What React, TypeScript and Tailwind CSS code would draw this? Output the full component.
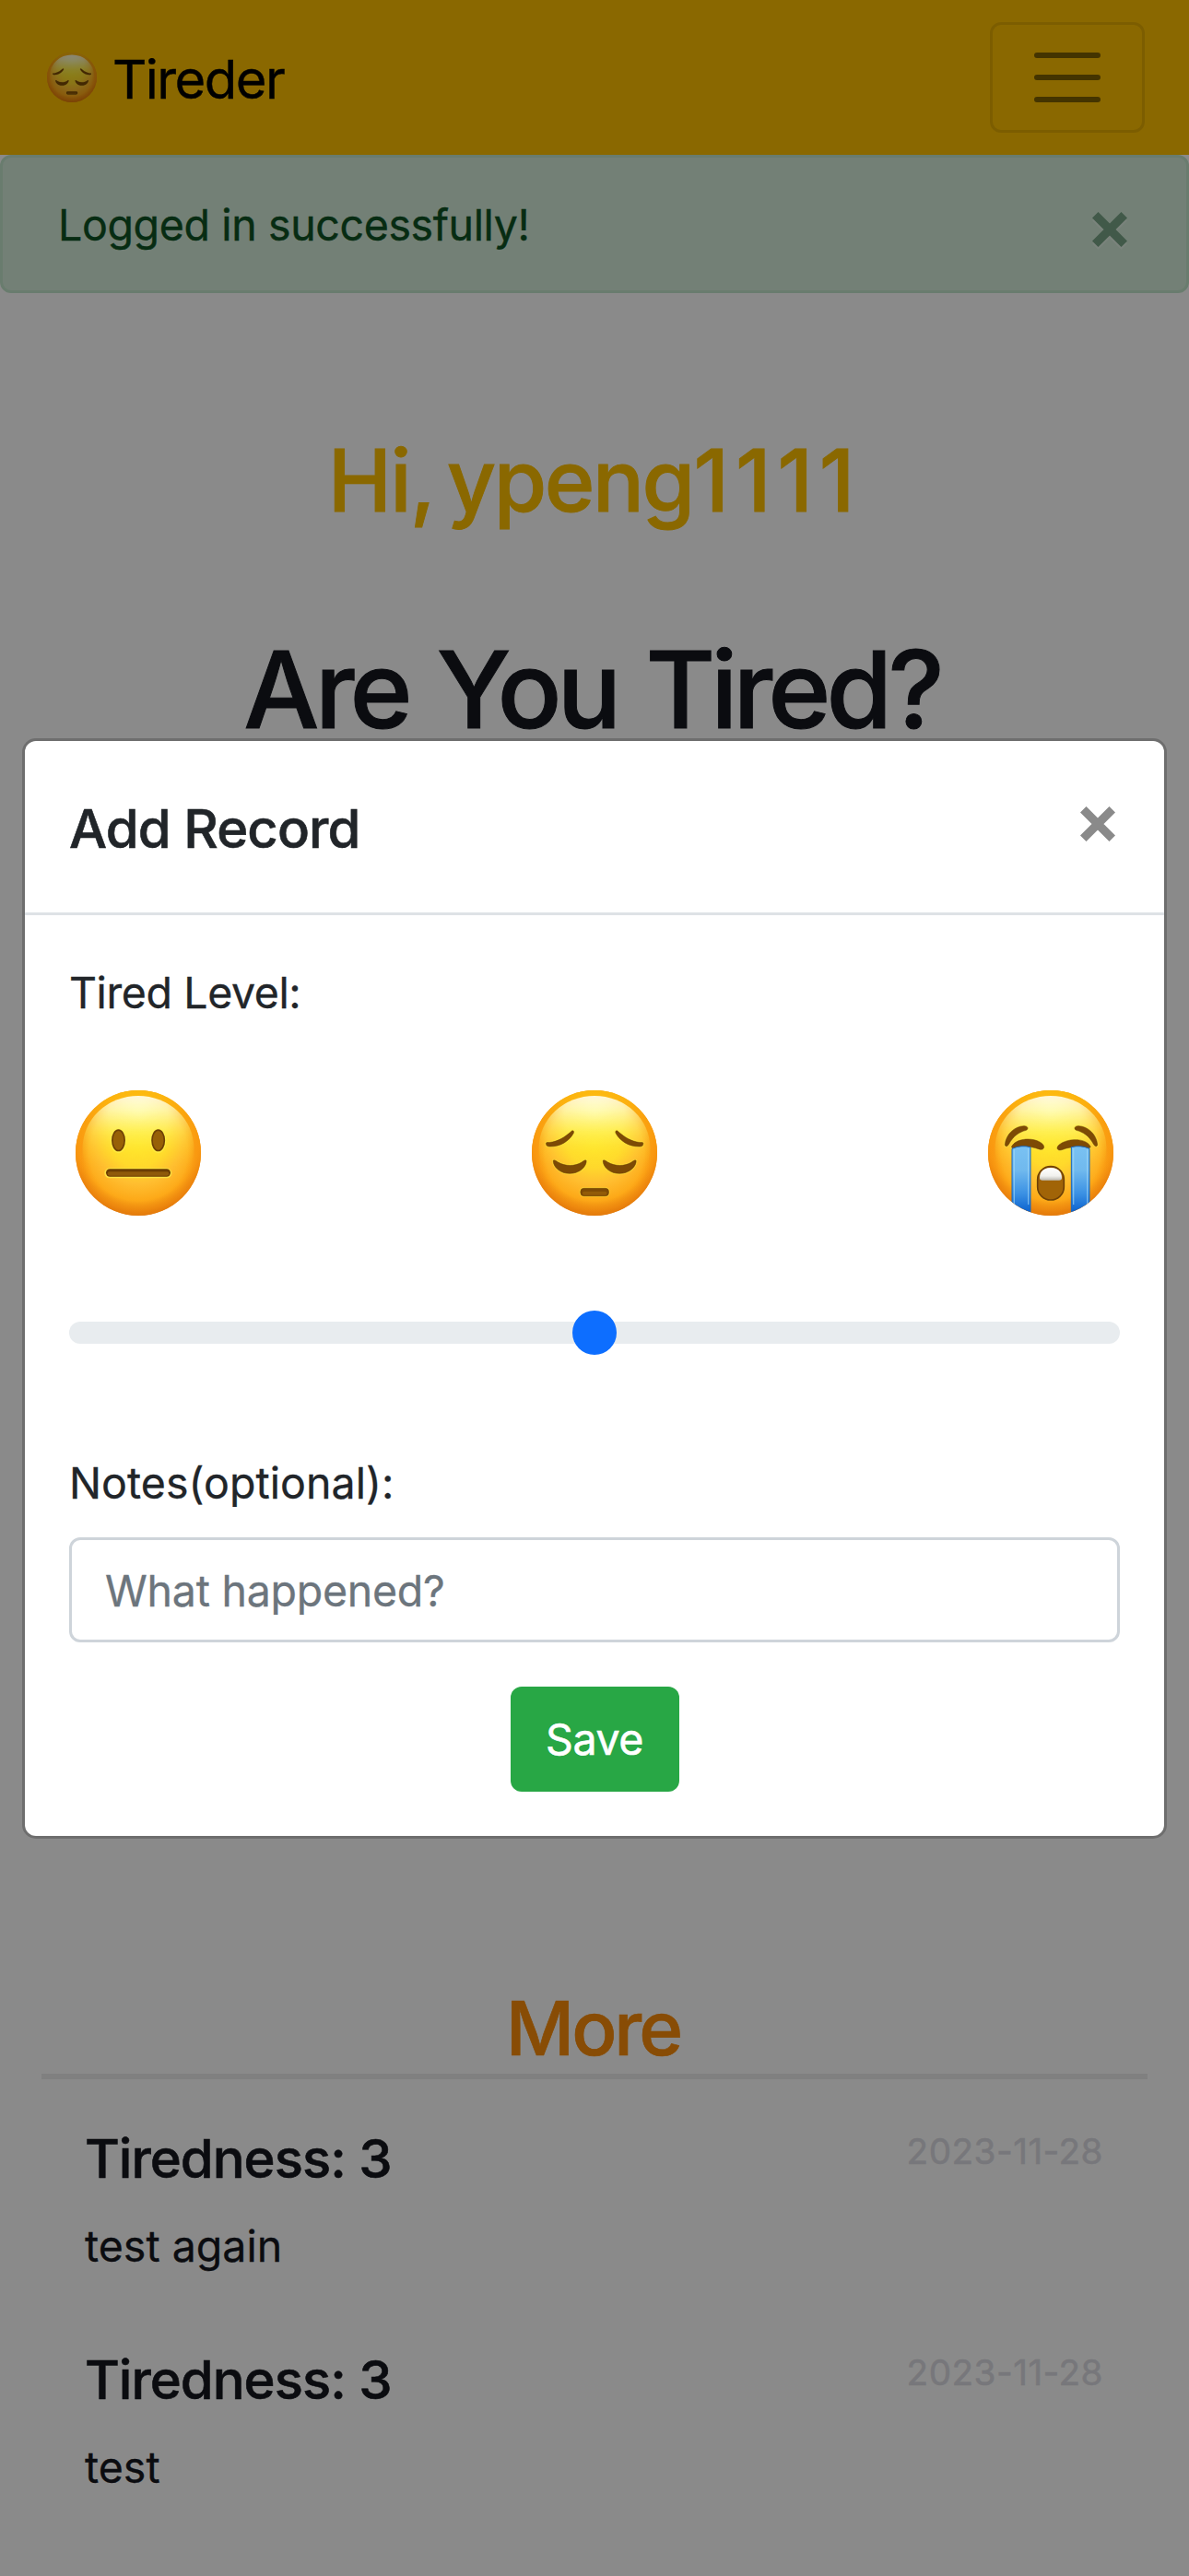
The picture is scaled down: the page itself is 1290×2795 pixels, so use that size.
import type { ReactNode } from "react";

type Mood = "neutral" | "pensive" | "crying";

const INK = "#7d4a05";

function Features({ mood, id }: { mood: Mood; id: string }): ReactNode {
  if (mood === "neutral") {
    return (
      <g>
        <g fill="none" stroke="#fff04a" strokeWidth="6" opacity="0.7">
          <ellipse cx="175.500" cy="202.500" rx="23" ry="37" />
          <ellipse cx="305" cy="202.500" rx="23" ry="37" />
          <rect x="133" y="294" width="213" height="27" rx="13" />
        </g>
        <g fill="#976007" stroke="#6f4106" strokeWidth="5">
          <ellipse cx="175.500" cy="201" rx="20" ry="33.500" />
          <ellipse cx="305" cy="201" rx="20" ry="33.500" />
        </g>
        <rect x="135" y="294" width="210" height="25" rx="12.500" fill="#6b3d03" />
        <rect x="140" y="303" width="200" height="13" rx="6.500" fill="#8f5a0a" />
      </g>
    );
  }
  if (mood === "pensive") {
    const shapes = (
      <>
        <path d="M85 212C84 205 92 209 106 206C134 200 153 184 168 171C173 167 177 172 174 178C160 203 132 222 96 221C89 221 85 218 85 212Z" />
        <path d="M401 212C402 205 394 209 380 206C352 200 333 184 318 171C313 167 309 172 312 178C326 203 354 222 390 221C397 221 401 218 401 212Z" />
        <path d="M108 267C111 263 118 268 124 272C148 286 178 286 201 272C208 267 213 263 216 267C217 285 195 309 162 309C128 309 108 286 108 267Z" />
        <path d="M270 267C273 263 280 268 286 272C310 286 340 286 363 272C370 267 375 263 378 267C379 285 357 309 324 309C290 309 270 286 270 267Z" />
        <rect x="197" y="357" width="92" height="25" rx="11" />
      </>
    );
    return (
      <g transform="translate(-2.500 0)">
        <g fill="none" stroke="#ffec3d" strokeWidth="7" opacity="0.55">
          {shapes}
        </g>
        <g fill={INK} stroke="#693b03" strokeWidth="1.500">
          {shapes}
        </g>
        <rect x="203" y="367" width="80" height="12" rx="6" fill="#925b08" />
      </g>
    );
  }
  const brows = (
    <>
      <path d="M91 214C94 182 121 155 153 154C165 154 169 163 160 168C137 174 119 186 104 213C99 223 91 222 91 214Z" />
      <path d="M392 214C389 182 362 155 330 154C318 154 314 163 323 168C346 174 364 186 379 213C384 223 392 222 392 214Z" />
      <path d="M112 222C121 203 146 197 166 197C194 197 217 210 218 222C218 232 209 232 200 229C172 219 143 219 116 228Z" />
      <path d="M370 222C361 203 336 198 315 199C287 200 262 214 261 225C261 234 270 234 279 231C307 220 337 220 364 228Z" />
    </>
  );
  return (
    <g>
      <g fill="none" stroke="#ffee48" strokeWidth="7" opacity="0.5">
        {brows}
      </g>
      <g fill={INK} stroke="#693b03" strokeWidth="1.500">
        {brows}
      </g>
      <g clipPath={`url(#${id}-clip)`}>
        <path d="M114 228Q144 215 174 223V460H114Z" fill={`url(#${id}-tear)`} stroke="#1766bd" strokeWidth="3" />
        <path d="M307 223Q337 215 366 228V460H307Z" fill={`url(#${id}-tear)`} stroke="#1766bd" strokeWidth="3" />
        <path d="M121 231V410M167 228V410M314 228V410M359 231V410" stroke="#a4daf8" strokeWidth="4" opacity="0.6" />
      </g>
      <rect x="193" y="283" width="93" height="115" rx="46" fill="#ffdd31" opacity="0.6" />
      <rect x="197" y="286" width="86" height="109" rx="43" fill="#a16407" stroke="#704006" strokeWidth="5" />
      <path d="M204 323C204 300 220 290 240 290S276 300 276 323C276 329 273 331 267 331H213C207 331 204 329 204 323Z" fill={`url(#${id}-teeth)`} />
    </g>
  );
}

function Emoji({ mood, id, className }: { mood: Mood; id: string; className: string }) {
  return (
    <svg viewBox="36 38 408 408" className={className} role="img" aria-label={mood}>
      <defs>
        <radialGradient id={`${id}-face`} gradientUnits="userSpaceOnUse" cx="240" cy="200" r="245">
          <stop offset="0" stopColor="#ffe52a" />
          <stop offset="0.36" stopColor="#ffd92c" />
          <stop offset="0.58" stopColor="#ffbe30" />
          <stop offset="0.8" stopColor="#fda918" />
          <stop offset="0.93" stopColor="#ea8c10" />
          <stop offset="1" stopColor="#cf700b" />
        </radialGradient>
        <linearGradient id={`${id}-rim`} gradientUnits="userSpaceOnUse" x1="0" y1="38" x2="0" y2="330">
          <stop offset="0" stopColor="#ffc60c" />
          <stop offset="0.3" stopColor="#fca60d" />
          <stop offset="0.65" stopColor="#fb9a10" />
          <stop offset="1" stopColor="#fb9a10" stopOpacity="0" />
        </linearGradient>
        <radialGradient id={`${id}-fade`} gradientUnits="userSpaceOnUse" cx="240" cy="240" r="205">
          <stop offset="0.78" stopColor="#f98d0c" stopOpacity="0" />
          <stop offset="1" stopColor="#ec7f0b" stopOpacity="0.75" />
        </radialGradient>
        <linearGradient id={`${id}-shine`} gradientUnits="userSpaceOnUse" x1="0" y1="56" x2="0" y2="290">
          <stop offset="0" stopColor="#ffffec" />
          <stop offset="0.2" stopColor="#fffcb8" />
          <stop offset="0.5" stopColor="#fff35e" stopOpacity="0.85" />
          <stop offset="0.8" stopColor="#ffe92c" stopOpacity="0.4" />
          <stop offset="1" stopColor="#ffe12c" stopOpacity="0" />
        </linearGradient>
        <radialGradient id={`${id}-spread`} gradientUnits="userSpaceOnUse" cx="240" cy="120" r="215">
          <stop offset="0" stopColor="#fff" />
          <stop offset="0.45" stopColor="#fff" stopOpacity="0.85" />
          <stop offset="1" stopColor="#fff" stopOpacity="0.2" />
        </radialGradient>
        <mask id={`${id}-mask`}>
          <rect width="480" height="480" fill={`url(#${id}-spread)`} />
        </mask>
        <linearGradient id={`${id}-tear`} gradientUnits="userSpaceOnUse" x1="0" y1="225" x2="0" y2="435">
          <stop offset="0" stopColor="#79c1f2" />
          <stop offset="0.35" stopColor="#70b9ee" />
          <stop offset="0.7" stopColor="#3c92e4" />
          <stop offset="1" stopColor="#0b62cf" />
        </linearGradient>
        <linearGradient id={`${id}-teeth`} x1="0" y1="0" x2="0" y2="1">
          <stop offset="0" stopColor="#ffffff" />
          <stop offset="0.65" stopColor="#f1f1ee" />
          <stop offset="1" stopColor="#bdbbb5" />
        </linearGradient>
        <clipPath id={`${id}-clip`}>
          <circle cx="240" cy="242" r="203.500" />
        </clipPath>
      </defs>
      <circle cx="240" cy="242" r="204" fill={`url(#${id}-face)`} />
      <circle cx="240" cy="242" r="204" fill={`url(#${id}-fade)`} />
      <circle cx="240" cy="242" r="194" fill="none" stroke={`url(#${id}-rim)`} strokeWidth="20" opacity="0.75" />
      <ellipse cx="240" cy="225" rx="181" ry="169" fill={`url(#${id}-shine)`} mask={`url(#${id}-mask)`} />
      <Features mood={mood} id={id} />
    </svg>
  );
}

function Cross({ className, shadow }: { className: string; shadow?: boolean }) {
  return (
    <svg viewBox="0 0 38 42" className={className} fill="none" strokeWidth="9.200">
      {shadow && <path d="M3.250 6.250 34.750 37.750M34.750 6.250 3.250 37.750" stroke="#fff" strokeOpacity="0.300" />}
      <path d="M3.250 3.250 34.750 34.750M34.750 3.250 3.250 34.750" stroke="currentColor" />
    </svg>
  );
}

const records = [
  { level: 3, note: "test again", date: "2023-11-28" },
  { level: 3, note: "test", date: "2023-11-28" },
];

function Page() {
  return (
    <div className="flex h-full flex-col bg-white text-[#15171e]">
      <nav className="flex h-[168px] shrink-0 items-center justify-between bg-[#ffc000] pr-12 pl-[51px] text-black">
        <div className="flex items-center">
          <Emoji mood="pensive" id="brand" className="size-[54px]" />
          <span className="ml-[17px] pt-1 text-[58px] leading-[90px] tracking-[-1.58px] [-webkit-text-stroke:0.4px]">Tireder</span>
        </div>
        <button className="flex h-[120px] w-[168px] items-center justify-center rounded-xl border-[3px] border-black/10">
          <svg viewBox="0 0 30 30" className="size-[90px]" stroke="#000" strokeOpacity="0.500" strokeWidth="2" strokeLinecap="round">
            <path d="M4 7h22M4 15h22M4 23h22" />
          </svg>
        </button>
      </nav>

      <div className="flex h-[150px] shrink-0 items-start justify-between rounded-xl border-[3px] border-[#c3e6cb] bg-[#d4edda] pt-[37px] pr-16 pl-[60px] text-[#0d5223]">
        <span className="text-[46.5px] leading-[72px] tracking-[-0.37px] [-webkit-text-stroke:0.4px]">Logged in successfully!</span>
        <Cross shadow className="mt-[22px] h-[42px] w-[38px] text-[#79a587]" />
      </div>

      <h2 className="mt-[145px] text-center text-[93px] leading-[116px] font-medium text-[#ffc000] [-webkit-text-stroke:0.9px]">
        <span className="tracking-[-1.84px] [word-spacing:-8.3px]">Hi, </span>
        <span className="mr-px tracking-[-2.49px]">ypeng</span>
        <span className="tracking-[6.8px]">1111</span>
      </h2>
      <h1 className="mt-[97px] pr-1.5 text-center text-[116px] leading-[144px] font-medium tracking-[-4.9px] [-webkit-text-stroke:1px] [word-spacing:5px]">
        Are You Tired?
      </h1>

      <section className="mt-auto h-[644px] px-[45px]">
        <h3 className="h-[99px] pr-[3px] text-center text-[81.5px] leading-[100px] font-medium tracking-[-2.99px] text-[#fb8d0a] [-webkit-text-stroke:0.7px]">More</h3>
        <hr className="h-1.5 border-0 bg-[#ececec]" />
        <ul className="pt-[50px]">
          {records.map((r) => (
            <li key={r.note} className="h-[240px] pr-12 pl-[47px]">
              <div className="flex items-start justify-between">
                <h5 className="text-[58px] leading-[73px] font-medium tracking-[-1px] [-webkit-text-stroke:0.6px]">Tiredness: {r.level}</h5>
                <span className="-mt-[2px] text-[38.7px] leading-[60px] tracking-[0.46px] text-[#dcdce3] [-webkit-text-stroke:0.5px]">{r.date}</span>
              </div>
              <p className="mt-[22px] text-[46.5px] leading-[72px] [-webkit-text-stroke:0.3px]">{r.note}</p>
            </li>
          ))}
        </ul>
      </section>
    </div>
  );
}

function AddRecordModal() {
  return (
    <div className="absolute top-[801px] left-[24px] flex h-[1194px] w-[1242px] flex-col rounded-[15px] border-[3px] border-black/20 bg-white bg-clip-padding text-[46.5px] text-[#212529]">
      <header className="flex h-[189px] shrink-0 items-start justify-between border-b-[3px] border-[#dee2e6] pr-[53px] pl-12">
        <h5 className="mt-[50px] text-[58px] leading-[90px] font-medium tracking-[-0.89px] [-webkit-text-stroke:0.6px]">Add Record</h5>
        <Cross className="mt-[71px] h-[42px] w-[38px] text-[#8a8a8a]" />
      </header>
      <div className="flex flex-col px-12 pt-12 [-webkit-text-stroke:0.3px]">
        <label className="leading-[73px] tracking-[-0.4px]">Tired Level:</label>
        <div className="mt-[69px] flex justify-between px-[7px]">
          <Emoji mood="neutral" id="low" className="size-[136px]" />
          <Emoji mood="pensive" id="mid" className="size-[136px]" />
          <Emoji mood="crying" id="high" className="size-[136px]" />
        </div>
        <div className="mt-[103px] flex h-12 items-center">
          <div className="flex h-6 w-full items-center justify-center rounded-full bg-[#e8ecef]">
            <span className="size-12 shrink-0 rounded-full bg-[#0d6eff]" />
          </div>
        </div>
        <label className="mt-[103px] leading-[72px] tracking-[0.05px]">Notes(optional):</label>
        <div className="mt-[23px] h-[114px] rounded-xl border-[3px] border-[#ced4da] px-9 pt-[19px] leading-[72px] tracking-[-0.26px] text-[#6c757d]">
          What happened?
        </div>
        <button className="mt-12 h-[114px] w-[183px] self-center rounded-xl bg-[#28a745] pt-0.5 tracking-[-0.4px] text-white [-webkit-text-stroke:0.6px]">
          Save
        </button>
      </div>
    </div>
  );
}

export default function App() {
  return (
    <main className="relative h-[2795px] w-full overflow-hidden font-['Inter',sans-serif]">
      <Page />
      <div className="absolute inset-0 bg-black/46" />
      <AddRecordModal />
    </main>
  );
}
